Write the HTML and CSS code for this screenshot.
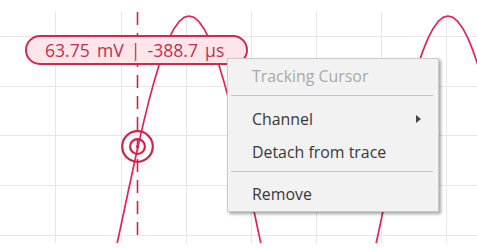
FILE: index.html
```html
<!DOCTYPE html>
<html>
<head>
<meta charset="utf-8">
<link rel="stylesheet" href="styles.css">
</head>
<body>
<div class="scope">
  <svg class="plot" width="477" height="248" viewBox="0 0 477 248">
    <defs>
      <clipPath id="area"><rect x="0" y="12" width="477" height="231"/></clipPath>
    </defs>
    <g class="grid">
      <line x1="0" y1="36.5" x2="477" y2="36.5"/>
      <line x1="0" y1="86.5" x2="477" y2="86.5"/>
      <line x1="0" y1="135.5" x2="477" y2="135.5"/>
      <line x1="0" y1="185.5" x2="477" y2="185.5"/>
      <line x1="0" y1="235.5" x2="477" y2="235.5"/>
      <line x1="55.5" y1="12" x2="55.5" y2="243"/>
      <line x1="121.5" y1="12" x2="121.5" y2="243"/>
      <line x1="186.5" y1="12" x2="186.5" y2="243"/>
      <line x1="251.5" y1="12" x2="251.5" y2="243"/>
      <line x1="316.5" y1="12" x2="316.5" y2="243"/>
      <line x1="381.5" y1="12" x2="381.5" y2="243"/>
      <line x1="446.5" y1="12" x2="446.5" y2="243"/>
    </g>
    <line class="cursor-line" x1="137.5" y1="12" x2="137.5" y2="243"/>
    <g clip-path="url(#area)">
      <polyline class="wave" points="114,257.8 119,234.7 124,211.2 129,187.7 134,164.5 139,142.1 144,120.6 149,100.4 154,81.9 159,65.2 164,50.6 169,38.4 174,28.7 179,21.7 184,17.4 189,16 194,17.4 199,21.7 204,28.7 209,38.4 214,50.6 219,65.2 224,81.9 229,100.4 234,120.6 239,142.1 244,164.5 249,187.7 254,211.2 259,234.7 264,257.8"/>
      <polyline class="wave" points="373,257.8 378,234.7 383,211.2 388,187.7 393,164.5 398,142.1 403,120.6 408,100.4 413,81.9 418,65.2 423,50.6 428,38.4 433,28.7 438,21.7 443,17.4 448,16 453,17.4 458,21.7 463,28.7 468,38.4 473,50.6 478,65.2"/>
    </g>
    <g class="marker">
      <circle cx="137.5" cy="146.5" r="15.3"/>
      <circle cx="137.5" cy="146.5" r="7.4"/>
      <circle class="dot" cx="137.5" cy="146.5" r="1.6"/>
    </g>
  </svg>

  <div class="readout">63.75 mV | -388.7 µs</div>

  <div class="menu">
    <div class="item disabled title">Tracking Cursor</div>
    <div class="sep sep-a"></div>
    <div class="item submenu">Channel<span class="arrow"></span></div>
    <div class="item">Detach from trace</div>
    <div class="sep sep-b"></div>
    <div class="item">Remove</div>
  </div>
</div>
</body>
</html>
```

FILE: styles.css
```css
html, body {
  margin: 0;
  padding: 0;
  background: #ffffff;
}

.scope {
  position: relative;
  width: 477px;
  height: 248px;
  overflow: hidden;
  font-family: "Open Sans", "Noto Sans", sans-serif;
}

.plot {
  display: block;
}

.grid line {
  stroke: #e7e7e7;
  stroke-width: 1;
  shape-rendering: crispEdges;
}

.cursor-line {
  stroke: #c8284a;
  stroke-width: 1.6;
  stroke-dasharray: 13 8;
}

.wave {
  fill: none;
  stroke: #e0245a;
  stroke-width: 1.7;
  stroke-linejoin: round;
}

.marker circle {
  fill: none;
  stroke: #cc2448;
  stroke-width: 2.2;
}

.marker .dot {
  fill: #cc2448;
  stroke: none;
}

.readout {
  position: absolute;
  left: 25px;
  top: 35px;
  width: 223px;
  height: 30px;
  box-sizing: border-box;
  border: 2px solid #cf2a4e;
  border-radius: 15px;
  background: #fde5ea;
  color: #c0304f;
  font-size: 17.6px;
  line-height: 26px;
  padding-left: 18px;
  word-spacing: 2.5px;
  white-space: nowrap;
}

.menu {
  position: absolute;
  left: 227px;
  top: 58px;
  width: 212px;
  box-sizing: border-box;
  background: #f2f2f2;
  border: 1px solid #c9c9c9;
  box-shadow: 2px 2px 3px rgba(0, 0, 0, 0.35);
  color: #383838;
  font-size: 15.9px;
}

.item {
  height: 33px;
  line-height: 33px;
  padding-left: 24px;
  position: relative;
  white-space: nowrap;
}

.item.title {
  height: 34px;
  line-height: 34px;
}

.item.disabled {
  color: #a8a8a8;
}

.sep {
  height: 1px;
  background: #c4c4c4;
  margin-left: 3px;
  margin-right: 5px;
}

.sep-a {
  margin-top: 2px;
  margin-bottom: 7px;
}

.sep-b {
  margin-top: 2px;
  margin-bottom: 6px;
}

.arrow {
  position: absolute;
  left: 188px;
  top: 12px;
  width: 0;
  height: 0;
  border-top: 4px solid transparent;
  border-bottom: 4px solid transparent;
  border-left: 5px solid #444444;
}
```
